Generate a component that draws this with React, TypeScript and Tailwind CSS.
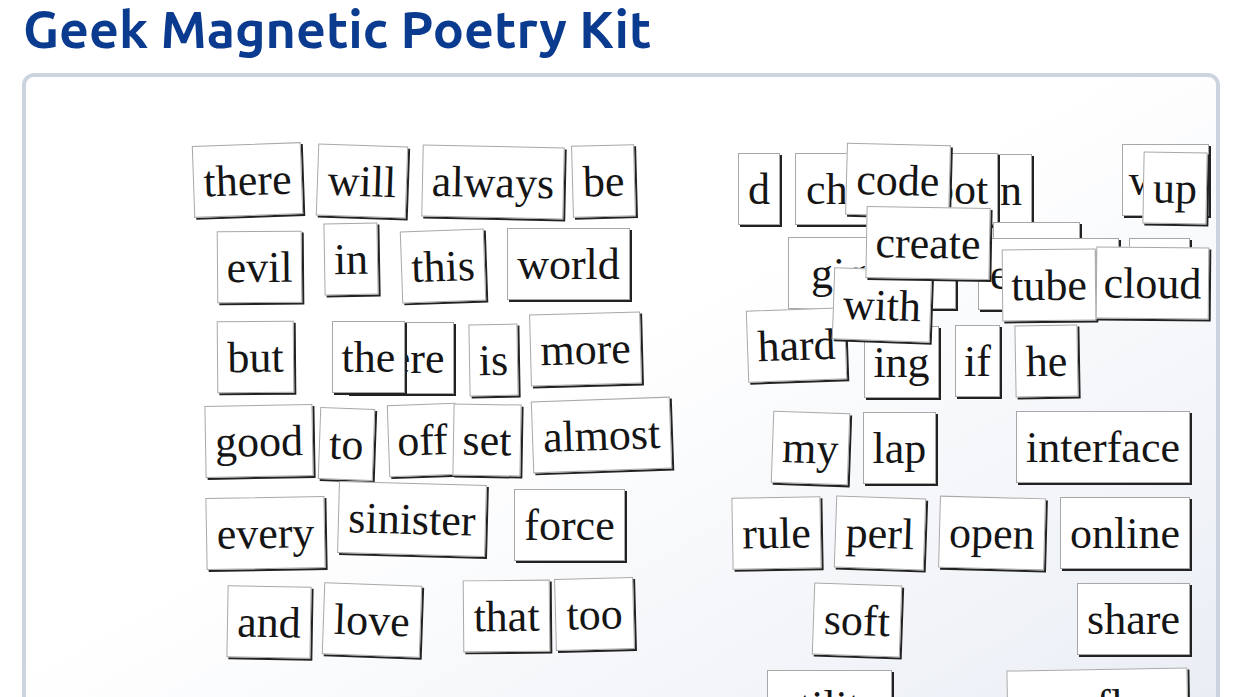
type Magnet = {
  word: string;
  x: number;
  y: number;
  w: number;
  r?: number;
};

// page coordinates of each tile (top-left incl. border), the board origin is subtracted below
const magnets: Magnet[] = [
  // left column
  { word: "there", x: 193, y: 144, w: 109, r: -2 },
  { word: "will", x: 317, y: 145, w: 90, r: 2 },
  { word: "always", x: 422, y: 146, w: 142, r: 1.2 },
  { word: "be", x: 572, y: 145, w: 63, r: -1.5 },
  { word: "evil", x: 217, y: 231, w: 85, r: -0.5 },
  { word: "in", x: 324, y: 223, w: 54, r: -1 },
  { word: "this", x: 401, y: 230, w: 84, r: -2 },
  { word: "world", x: 507, y: 228, w: 123 },
  { word: "but", x: 217, y: 321, w: 77, r: -0.5 },
  { word: "there", x: 347, y: 322, w: 107 },
  { word: "the", x: 332, y: 321, w: 73 },
  { word: "is", x: 469, y: 324, w: 49, r: -1 },
  { word: "more", x: 530, y: 313, w: 111, r: -1.5 },
  { word: "good", x: 205, y: 405, w: 108, r: -1 },
  { word: "to", x: 319, y: 408, w: 55, r: 2 },
  { word: "off", x: 388, y: 404, w: 69, r: -2 },
  { word: "set", x: 453, y: 404, w: 68, r: 1 },
  { word: "almost", x: 532, y: 399, w: 139, r: -2 },
  { word: "every", x: 206, y: 497, w: 119, r: -1 },
  { word: "sinister", x: 338, y: 483, w: 148, r: 1.5 },
  { word: "force", x: 514, y: 489, w: 111 },
  { word: "and", x: 227, y: 586, w: 84, r: 1 },
  { word: "love", x: 323, y: 584, w: 98, r: 2 },
  { word: "that", x: 463, y: 580, w: 87, r: -0.5 },
  { word: "too", x: 555, y: 578, w: 79, r: -1.5 },

  // right column, back to front
  { word: "d", x: 738, y: 153, w: 42 },
  { word: "chip", x: 795, y: 153, w: 98 },
  { word: "own", x: 936, y: 154, w: 96 },
  { word: "bot", x: 922, y: 153, w: 76 },
  { word: "code", x: 846, y: 144, w: 104, r: 1.5 },
  { word: "web", x: 1122, y: 144, w: 87 },
  { word: "up", x: 1143, y: 152, w: 64, r: 1 },
  { word: "gigabit", x: 788, y: 237, w: 168 },
  { word: "net", x: 993, y: 222, w: 87 },
  { word: "on", x: 1129, y: 238, w: 61 },
  { word: "engine", x: 978, y: 238, w: 141 },
  { word: "tube", x: 1002, y: 249, w: 94, r: -0.5 },
  { word: "cloud", x: 1096, y: 247, w: 113, r: 0.5 },
  { word: "hard", x: 747, y: 309, w: 99, r: -2 },
  { word: "ing", x: 864, y: 326, w: 75 },
  { word: "if", x: 955, y: 325, w: 45 },
  { word: "he", x: 1015, y: 325, w: 63, r: -1 },
  { word: "with", x: 833, y: 269, w: 98, r: 2 },
  { word: "create", x: 866, y: 207, w: 124, r: 1 },
  { word: "my", x: 772, y: 412, w: 77, r: 2 },
  { word: "lap", x: 863, y: 412, w: 73 },
  { word: "interface", x: 1016, y: 411, w: 174 },
  { word: "rule", x: 732, y: 497, w: 89, r: -1 },
  { word: "perl", x: 835, y: 497, w: 90, r: 2 },
  { word: "open", x: 939, y: 497, w: 106, r: 1.5 },
  { word: "online", x: 1060, y: 497, w: 130 },
  { word: "soft", x: 813, y: 584, w: 88, r: 2 },
  { word: "share", x: 1077, y: 583, w: 113 },
  { word: "utility", x: 767, y: 670, w: 125 },
  { word: "overflow", x: 1007, y: 669, w: 181, r: -1 },
];

const BOARD_X = 26;
const BOARD_Y = 77;

function Tile({ m }: { m: Magnet }) {
  return (
    <div
      className="absolute h-[72px] whitespace-nowrap border border-[#a8a8a8] bg-white pt-[14px] text-center font-['Liberation_Serif','Times_New_Roman',serif] text-[44px] leading-[44px] text-[#151515] shadow-[2px_2px_0_#222]"
      style={{
        left: m.x - BOARD_X,
        top: m.y - BOARD_Y,
        width: m.w,
        transform: m.r ? `rotate(${m.r}deg)` : undefined,
      }}
    >
      {m.word}
    </div>
  );
}

export default function App() {
  return (
    <div className="min-h-screen overflow-hidden bg-white">
      <h1 className="ml-[23px] pt-[3px] font-['Ubuntu','Open_Sans',sans-serif] text-[52px] font-bold leading-[52px] text-[#0b3b8f]">
        Geek Magnetic Poetry Kit
      </h1>

      <div className="relative mx-[22px] mt-[18px] h-[660px] rounded-[12px] border-4 border-[#ccd4e0] bg-gradient-to-br from-white from-45% to-[#e9edf4]">
        {magnets.map((m, i) => (
          <Tile key={i} m={m} />
        ))}
      </div>
    </div>
  );
}
